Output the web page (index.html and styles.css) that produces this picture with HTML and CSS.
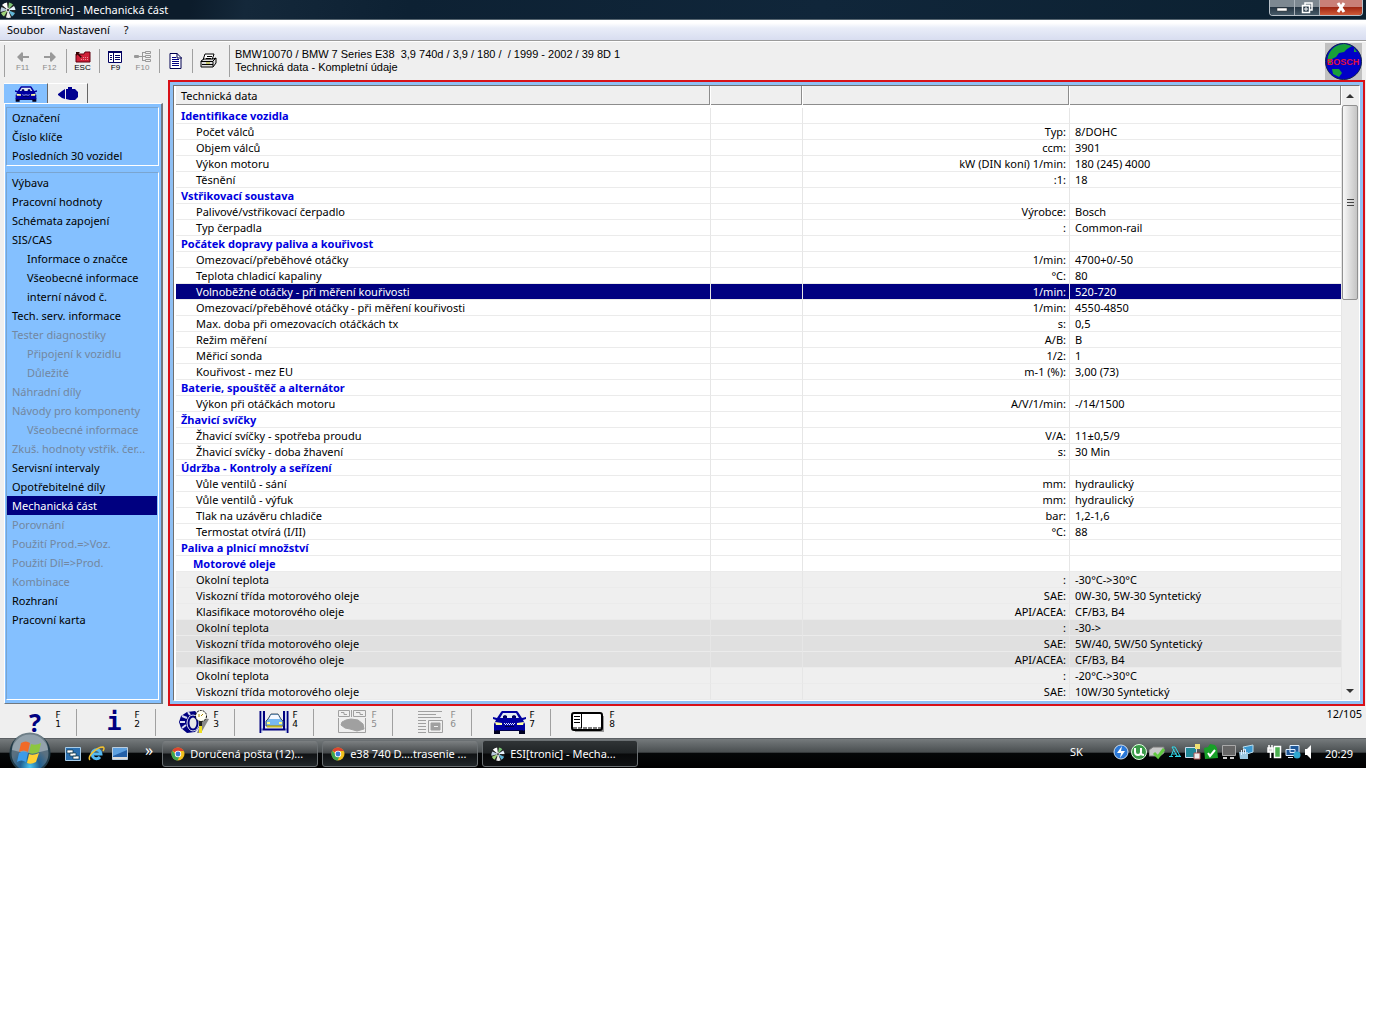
FILE: index.html
```html
<!DOCTYPE html>
<html lang="cs">
<head>
<meta charset="utf-8">
<title>ESI[tronic] - Mechanická část</title>
<link rel="stylesheet" href="styles.css">
</head>
<body>
<svg class="defs" aria-hidden="true">
  <symbol id="car" viewBox="0 0 33 23">
    <path d="M1 18h6v5H1zm25 0h6v5h-6z" fill="#000020"/>
    <path d="M9 0h15l1 1 4 6 4-1v2l-3 1 2 4v6l-2 1H3l-2-1v-6l2-4-3-1V6l4 1 4-6z" fill="#0000a0"/>
    <path d="M10 2h13l3 5H7z" fill="#e4ecf4"/>
    <path d="M10 7V5l2-1 2 1v2zM19 7V5l2-1 2 1v2z" fill="#000060"/>
    <path d="M3 19h27v1H3zM12 15h9v1h-9z" fill="#000048"/>
    <path d="M2 11l7 1v2H3zm29 0l-7 1v2h6z" fill="#ffffa0"/>
    <path d="M11 12.500h11" stroke="#e0e8ff" stroke-dasharray="1 1"/><path d="M12 13.500h10" stroke="#e0e8ff" stroke-dasharray="1 1"/>
  </symbol>
  <symbol id="disc" viewBox="0 0 16 16">
    <circle cx="8" cy="8" r="7.500" fill="#222"/>
    <path d="M8 8L2 3a8 8 0 0 1 5-2.500z" fill="#fff"/><path d="M8 8L9 .5a8 8 0 0 1 4 2z" fill="#7cc576"/>
    <path d="M8 8l6-4a8 8 0 0 1 1.500 4z" fill="#e8f4ff"/><path d="M8 8l7 3a8 8 0 0 1-3 3.500z" fill="#62b7d8"/>
    <path d="M8 8l3 7.500a8 8 0 0 1-5 0z" fill="#eee"/><path d="M8 8l-4 6.500a8 8 0 0 1-3-3.500z" fill="#9fd47a"/>
    <path d="M8 8L.5 10a8 8 0 0 1 1-5z" fill="#bcd"/>
    <circle cx="8" cy="8" r="2" fill="#ddd"/><circle cx="8" cy="8" r="1" fill="#111"/>
  </symbol>
  <symbol id="chrome" viewBox="0 0 14 14">
    <circle cx="7" cy="7" r="6.500" fill="#f2c01e"/>
    <path d="M7 7L1.400 3.700A6.500 6.500 0 0 1 12.800 4H7z" fill="#dd4330"/>
    <path d="M1.400 3.700A6.500 6.500 0 0 0 6.500 13.500L9 8.500 5 8z" fill="#3fa650"/>
    <circle cx="7" cy="7" r="3.200" fill="#fff"/><circle cx="7" cy="7" r="2.400" fill="#3c79d8"/>
  </symbol>
</svg>

<div class="desktop">
<header class="titlebar">
  <svg class="i16"><use href="#disc"/></svg>
  <h1>ESI[tronic] - Mechanická část</h1>
  <div class="winbtns">
    <button aria-label="Minimalizovat"><svg width="12" height="12"><path d="M1 6h10v3H1z" fill="#fff" stroke="#333" stroke-width=".5"/></svg></button>
    <button aria-label="Obnovit"><svg width="12" height="12" fill="none" stroke="#fff" stroke-width="1.500"><path d="M4 3V1h7v7H9"/><path d="M1.500 3.500h7v7h-7z"/><path d="M4 6h2v2H4z" stroke-width="1"/></svg></button>
    <button class="close" aria-label="Zavřít"><svg width="12" height="12"><path d="M3 1l6 9M9 1l-6 9" stroke="#fff" stroke-width="3"/></svg></button>
  </div>
</header>

<nav class="menu"><a href="#">Soubor</a><a href="#">Nastavení</a><a href="#">?</a></nav>

<div class="toolbar">
  <button class="tool off"><svg width="14" height="12"><path d="M1 6l5-5 1 1v3h6v2H7v3l-1 1z" fill="#999"/></svg><span>F11</span></button>
  <button class="tool off"><svg width="14" height="12"><path d="M13 6L8 1 7 2v3H1v2h6v3l1 1z" fill="#999"/></svg><span>F12</span></button>
  <i class="sep"></i>
  <button class="tool"><svg width="16" height="12"><path d="M1 3h8l1-2h5v10H1z" fill="#d02038" stroke="#600010"/><path d="M6 6.500h8M6 8.500h8" stroke="#f09098" stroke-dasharray="1 1"/><path d="M1 1h4L3.500 2.500 7 6 6 7 2.500 3.500 1 5z" fill="#300"/></svg><span>ESC</span></button>
  <i class="sep"></i>
  <button class="tool"><svg width="15" height="12"><path d="M.5.5h13v11H.5z" fill="#fff" stroke="#000060"/><path d="M0 1h14" stroke="#000060" stroke-width="2"/><path d="M5.500 1v11M2 4.500h2M2 6.500h2M2 8.500h2M7 4.500h5M7 6.500h5M7 8.500h5" stroke="#000060"/></svg><span>F9</span></button>
  <button class="tool off"><svg width="18" height="12" fill="none" stroke="#999"><path d="M0 5.500h8M8.500 1.500v8M8 1.500h3M8 5.500h3M8 9.500h3M11.500.5h5v2h-5zM11.500 4.500h5v2h-5zM11.500 8.500h5v2h-5zM.5 4.500h4v2h-4z"/></svg><span>F10</span></button>
  <i class="sep"></i>
  <button class="tool" aria-label="Dokument"><svg width="13" height="16"><path d="M1 .5h7l4 4v11H1z" fill="#fff" stroke="#000050"/><path d="M8 0v5h5" fill="none" stroke="#000050"/><path d="M3 4.500h4M3 6.500h7M3 8.500h7M3 10.500h7M3 12.500h7" stroke="#000080"/></svg></button>
  <i class="sep"></i>
  <button class="tool" aria-label="Tisk"><svg width="17" height="16"><path d="M5 1h9l-2 6H3z" fill="#fff" stroke="#000"/><path d="M7 3.500h5M6 5.500h5" stroke="#000"/><path d="M1 8l3-2h9l3-1v5l-3 4H1z" fill="#ddd" stroke="#000"/><path d="M1 8.500h12v5M13 8l3-3M2 11.500h11" fill="none" stroke="#000"/><path d="M6 10h4" stroke="#aa0"/></svg></button>
  <div class="vehicle">
    <p>BMW10070 / BMW 7 Series E38 &nbsp;3,9 740d / 3,9 / 180 / &nbsp;/ 1999 - 2002 / 39 8D 1</p>
    <p>Technická data - Kompletní údaje</p>
  </div>
  <div class="globe"><svg width="37" height="37"><circle cx="18.500" cy="18.500" r="18" fill="#0000c8" stroke="#102050"/><path d="M3 13C6 5 12 1 20 1l7 2-5 3-3 3-5 1-3 4-4 2-1 5-4-2z" fill="#18a038"/><path d="M7 26l7 0 3 4-3 4-6-3z" fill="#18a038"/><path d="M29 5l3 4-3 0z" fill="#18a038"/><text x="18" y="22" text-anchor="middle">BOSCH</text></svg></div>
</div>

<main class="work">
  <aside class="side">
    <div class="tabs">
      <button class="tab on" aria-label="Vozidlo"><svg width="22" height="16"><use href="#car"/></svg></button>
      <button class="tab" aria-label="Komponenty"><svg width="20" height="16" fill="#000090"><path d="M0 8l4-3 3-2v10l-3-1-4-3zM8 3h2V1h4v2h3l3 3v5l-3 3h-5l-4-1z"/></svg></button>
    </div>
    <div class="panel">
      <nav class="group"><a href="#">Označení</a><a href="#">Číslo klíče</a><a href="#">Posledních 30 vozidel</a></nav>
      <nav class="group rest">
        <a href="#">Výbava</a><a href="#">Pracovní hodnoty</a><a href="#">Schémata zapojení</a><a href="#">SIS/CAS</a>
        <a href="#" class="sub">Informace o značce</a><a href="#" class="sub">Všeobecné informace</a><a href="#" class="sub">interní návod č.</a>
        <a href="#">Tech. serv. informace</a><a href="#" class="off">Tester diagnostiky</a>
        <a href="#" class="sub off">Připojení k vozidlu</a><a href="#" class="sub off">Důležité</a>
        <a href="#" class="off">Náhradní díly</a><a href="#" class="off">Návody pro komponenty</a><a href="#" class="sub off">Všeobecné informace</a>
        <a href="#" class="off">Zkuš. hodnoty vstřik. čer...</a><a href="#">Servisní intervaly</a><a href="#">Opotřebitelné díly</a>
        <a href="#" class="sel">Mechanická část</a><a href="#" class="off">Porovnání</a><a href="#" class="off">Použití Prod.=&gt;Voz.</a>
        <a href="#" class="off">Použití Díl=&gt;Prod.</a><a href="#" class="off">Kombinace</a><a href="#">Rozhraní</a><a href="#">Pracovní karta</a>
      </nav>
    </div>
  </aside>

  <section class="frame">
    <div class="list">
      <table>
        <colgroup><col><col class="c2"><col class="c3"><col class="c4"></colgroup>
        <thead><tr><th>Technická data</th><th></th><th></th><th></th></tr></thead>
        <tbody>
          <tr class="head"><td>Identifikace vozidla</td><td></td><td></td><td></td></tr>
          <tr><td>Počet válců</td><td></td><td>Typ:</td><td>8/DOHC</td></tr>
          <tr><td>Objem válců</td><td></td><td>ccm:</td><td>3901</td></tr>
          <tr><td>Výkon motoru</td><td></td><td>kW (DIN koní) 1/min:</td><td>180 (245) 4000</td></tr>
          <tr><td>Těsnění</td><td></td><td>:1:</td><td>18</td></tr>
          <tr class="head"><td>Vstřikovací soustava</td><td></td><td></td><td></td></tr>
          <tr><td>Palivové/vstřikovací čerpadlo</td><td></td><td>Výrobce:</td><td>Bosch</td></tr>
          <tr><td>Typ čerpadla</td><td></td><td>:</td><td>Common-rail</td></tr>
          <tr class="head"><td>Počátek dopravy paliva a kouřivost</td><td></td><td></td><td></td></tr>
          <tr><td>Omezovací/přeběhové otáčky</td><td></td><td>1/min:</td><td>4700+0/-50</td></tr>
          <tr><td>Teplota chladicí kapaliny</td><td></td><td>°C:</td><td>80</td></tr>
          <tr class="sel"><td>Volnoběžné otáčky - při měření kouřivosti</td><td></td><td>1/min:</td><td>520-720</td></tr>
          <tr><td>Omezovací/přeběhové otáčky - při měření kouřivosti</td><td></td><td>1/min:</td><td>4550-4850</td></tr>
          <tr><td>Max. doba při omezovacích otáčkách tx</td><td></td><td>s:</td><td>0,5</td></tr>
          <tr><td>Režim měření</td><td></td><td>A/B:</td><td>B</td></tr>
          <tr><td>Měřicí sonda</td><td></td><td>1/2:</td><td>1</td></tr>
          <tr><td>Kouřivost - mez EU</td><td></td><td>m-1 (%):</td><td>3,00 (73)</td></tr>
          <tr class="head"><td>Baterie, spouštěč a alternátor</td><td></td><td></td><td></td></tr>
          <tr><td>Výkon při otáčkách motoru</td><td></td><td>A/V/1/min:</td><td>-/14/1500</td></tr>
          <tr class="head"><td>Žhavicí svíčky</td><td></td><td></td><td></td></tr>
          <tr><td>Žhavicí svíčky - spotřeba proudu</td><td></td><td>V/A:</td><td>11±0,5/9</td></tr>
          <tr><td>Žhavicí svíčky - doba žhavení</td><td></td><td>s:</td><td>30 Min</td></tr>
          <tr class="head"><td>Údržba - Kontroly a seřízení</td><td></td><td></td><td></td></tr>
          <tr><td>Vůle ventilů - sání</td><td></td><td>mm:</td><td>hydraulický</td></tr>
          <tr><td>Vůle ventilů - výfuk</td><td></td><td>mm:</td><td>hydraulický</td></tr>
          <tr><td>Tlak na uzávěru chladiče</td><td></td><td>bar:</td><td>1,2-1,6</td></tr>
          <tr><td>Termostat otvírá (I/II)</td><td></td><td>°C:</td><td>88</td></tr>
          <tr class="head"><td>Paliva a plnicí množství</td><td></td><td></td><td></td></tr>
          <tr class="head inner"><td>Motorové oleje</td><td></td><td></td><td></td></tr>
          <tr class="light"><td>Okolní teplota</td><td></td><td>:</td><td>-30°C-&gt;30°C</td></tr>
          <tr class="light"><td>Viskozní třída motorového oleje</td><td></td><td>SAE:</td><td>0W-30, 5W-30 Syntetický</td></tr>
          <tr class="light"><td>Klasifikace motorového oleje</td><td></td><td>API/ACEA:</td><td>CF/B3, B4</td></tr>
          <tr class="dark"><td>Okolní teplota</td><td></td><td>:</td><td>-30-&gt;</td></tr>
          <tr class="dark"><td>Viskozní třída motorového oleje</td><td></td><td>SAE:</td><td>5W/40, 5W/50 Syntetický</td></tr>
          <tr class="dark"><td>Klasifikace motorového oleje</td><td></td><td>API/ACEA:</td><td>CF/B3, B4</td></tr>
          <tr class="light"><td>Okolní teplota</td><td></td><td>:</td><td>-20°C-&gt;30°C</td></tr>
          <tr class="light"><td>Viskozní třída motorového oleje</td><td></td><td>SAE:</td><td>10W/30 Syntetický</td></tr>
        </tbody>
      </table>
      <div class="scroll">
        <button aria-label="Nahoru"><svg width="8" height="4"><path d="M0 4l4-4 4 4z" fill="#333"/></svg></button>
        <div class="track"><div class="thumb"><svg width="7" height="8"><path d="M0 .5h7M0 3.500h7M0 6.500h7" stroke="#444"/></svg></div></div>
        <button aria-label="Dolů"><svg width="8" height="4"><path d="M0 0l4 4 4-4z" fill="#333"/></svg></button>
      </div>
    </div>
  </section>
</main>

<footer class="fbar">
  <button class="fn"><span class="sym">?</span><span class="key">F<br>1</span></button>
  <button class="fn"><span class="sym serif">i</span><span class="key">F<br>2</span></button>
  <button class="fn"><svg width="31" height="24"><path d="M24 8l6 1-8 14h-4z" fill="#888"/><path d="M8 2l8-1 5 5v10l-5 6-8 1-6-5-2-6 2-6z" fill="#000080"/><path d="M3 6l5 2M1 12h5M3 18l4-3M9 2l2 3" stroke="#d8dcf0" stroke-width="2"/><ellipse cx="14" cy="13" rx="6" ry="8" fill="#000080" stroke="#d8dcf0"/><ellipse cx="14" cy="13" rx="3.500" ry="5.500" fill="#e8e8e8"/><circle cx="22" cy="6" r="5.500" fill="#fffff4" stroke="#000" stroke-dasharray="2 1"/><path d="M22 6l2-2M20 4v3" stroke="#a80"/><path d="M20 12h3v11h-3z" fill="#f0e020"/><path d="M20 11h3v5h-3z" fill="#222"/></svg><span class="key">F<br>3</span></button>
  <button class="fn"><svg width="30" height="24"><path d="M1.500 1v22M5 1v18M25 1v18M28.500 1v22M2 19.500h26" stroke="#000080" stroke-width="2"/><path d="M3 1v22M27 1v22" stroke="#b8c8f0"/><path d="M7 16v-5l2-2 3-5h7l3 5 2 2v5z" fill="#78b8f0" stroke="#456"/><path d="M10 9l2-4h7l2 4z" fill="#f4f8ff"/><path d="M8 13h3M20 13h3" stroke="#ffff80" stroke-width="2"/><path d="M8 16.500h15" stroke="#c8b820" stroke-width="2"/></svg><span class="key">F<br>4</span></button>
  <button class="fn off"><svg width="31" height="24" fill="none" stroke="#a0a0a0"><path d="M1.500.5h11v6h-11zM16.500.5h12v6h-12zM14.500 0v7M4 2.500h3v2h3M19 2.500h4v2h3M1.500 8v14.500h27V8"/><path d="M5 12l4-2 5-1 7 1 5 4 1 5-7 2-7-2-5-1-4-3z" fill="#a0a0a0"/></svg><span class="key">F<br>5</span></button>
  <button class="fn off"><svg width="29" height="24" fill="none" stroke="#a0a0a0"><path d="M0 1.500h24M0 4.500h18M0 7.500h23M0 10.500h8M0 13.500h8M0 16.500h8M0 19.500h8M0 22.500h8"/><path d="M10.500 10.500h14v12h-14z"/><path d="M13 13h9v7h-9z" fill="#a0a0a0"/><path d="M16 16.500h4" stroke="#efefef"/></svg><span class="key">F<br>6</span></button>
  <button class="fn"><svg width="33" height="23"><use href="#car"/></svg><span class="key">F<br>7</span></button>
  <button class="fn last"><svg width="35" height="21"><path d="M4 4h29v16H4z" fill="#999"/><rect x="1" y="1" width="30" height="17" rx="2" fill="#fff" stroke="#000" stroke-width="2"/><path d="M10.500 1v15" stroke="#000"/><path d="M3 4.500h6M3 7.500h6M3 10.500h6" stroke="#000"/><path d="M2 16h28" stroke="#000" stroke-dasharray="4 1"/></svg><span class="key">F<br>8</span></button>
  <output class="count">12/105</output>
</footer>

<div class="taskbar">
  <button class="orb" aria-label="Start"><svg width="42" height="42"><defs><radialGradient id="o" cy=".85"><stop offset="0" stop-color="#49c5f0"/><stop offset=".5" stop-color="#205f90"/><stop offset="1" stop-color="#5a7080"/></radialGradient></defs><circle cx="21" cy="21" r="19.500" fill="url(#o)" stroke="#223b48" stroke-width="2"/><path d="M3 18a18 18 0 0 1 36 0q-18 6-36 0z" fill="#fff" opacity=".35"/><path d="M12 11q5-3 9 0l-2 9q-4-3-9 0z" fill="#f06a28"/><path d="M22 12q5 2 10-1l-2 9q-6 3-10 1z" fill="#8cc63f"/><path d="M10 21q4-3 9 0l-2 9q-5-3-9 0z" fill="#3c9be8"/><path d="M20 22q4 2 10-1l-3 9q-5 3-9 1z" fill="#ffd034"/></svg></button>
  <div class="quick">
    <button aria-label="Přepnout okna"><svg width="16" height="14"><path d="M.5.5h15v13H.5z" fill="#2a6fb0" stroke="#a8cce8"/><path d="M2 3h6v3H2zM5 6h6v3H5zM8 9h6v3H8z" fill="#fff" stroke="#134" stroke-width=".7"/></svg></button>
    <button aria-label="Internet Explorer"><svg width="17" height="17"><path d="M4 9h9A4.500 4.500 0 1 0 12 12" fill="none" stroke="#55b8f0" stroke-width="3"/><path d="M2 15C-1 12 8 2 15 2q2 1 0 4" fill="none" stroke="#f0c030" stroke-width="1.500"/></svg></button>
    <button aria-label="Plocha"><svg width="16" height="14"><path d="M.5.5h15v12H.5z" fill="#5da0e0" stroke="#bcd"/><path d="M1 9L15 3v7H1z" fill="#2460a8"/><path d="M1 11h14" stroke="#ddd" stroke-width="2"/></svg></button>
  </div>
  <span class="more">»</span>
  <div class="tasks">
    <button><svg width="14" height="14"><use href="#chrome"/></svg>Doručená pošta (12)...</button>
    <button><svg width="14" height="14"><use href="#chrome"/></svg>e38 740 D....trasenie ...</button>
    <button class="on"><svg width="14" height="14"><use href="#disc"/></svg>ESI[tronic] - Mecha...</button>
  </div>
  <span class="lang">SK</span>
  <div class="tray">
    <svg width="16" height="16"><circle cx="8" cy="8" r="7" fill="#2a78d8" stroke="#cde"/><path d="M9 2L4 9h4l-1 5 5-7H8z" fill="#fff"/></svg>
    <svg width="16" height="16"><circle cx="8" cy="8" r="7.500" fill="#3a9a48" stroke="#dfd"/><path d="M4 4v4q0 3 3 3t3-3V4M10 9q0 2 3 2" fill="none" stroke="#fff" stroke-width="2"/></svg>
    <svg width="16" height="16"><path d="M0 6l4-3h11v6l-4 3H0z" fill="#c8c8c8" stroke="#777"/><path d="M5 9l4 4 6-8" fill="none" stroke="#60c840" stroke-width="3"/></svg>
    <svg width="16" height="16"><path d="M5 3h3l5 9h-3zM7 5L4 12M2 12.500h4M8 12.500h6M5 10h5" fill="none" stroke="#30d8e8"/></svg>
    <svg width="16" height="16"><path d="M.5 3.500h11v10H.5z" fill="#208898" stroke="#cde"/><path d="M10 0h5v5h-5z" fill="#f0e070"/><path d="M9 9h6v6H9z" fill="#eee" stroke="#a55"/></svg>
    <svg width="16" height="16"><path d="M1 4l4-1 2-3 5 1 2 3 1 10-13 1z" fill="#18a028"/><path d="M5 9l2 3 5-6" fill="none" stroke="#fff" stroke-width="2"/></svg>
    <svg width="16" height="16"><path d="M1.500 1.500h13v10h-13z" fill="#666" stroke="#aaa"/><path d="M2 14h4M9 14h4" stroke="#ccc" stroke-width="2"/></svg>
    <svg width="16" height="16"><path d="M4 3l10-2v7l-6 2z" fill="#3a98d0" stroke="#bde"/><path d="M0 8h9v7H1z" fill="#9cc8e0"/><path d="M2.500 11V6M4.500 10V5M6.500 10V5" stroke="#def"/></svg>
    <svg class="gap" width="16" height="16"><path d="M7.500 2.500h6v11h-6z" fill="#4caf50" stroke="#fff" stroke-width="1.500"/><path d="M1 4h5v4H1zM2 1v3M5 1v3M3.500 8v6" stroke="#fff" stroke-width="1.500" fill="#ddd"/></svg>
    <svg width="16" height="16"><path d="M5 1.500h9v7H5zM1 5.500h9v6H1z" fill="#205898" stroke="#def"/><circle cx="12" cy="11" r="3.500" fill="#30a8d0"/><path d="M3 13.500h5" stroke="#def"/></svg>
    <svg width="10" height="16"><path d="M2 5h2l4-4v14l-4-4H2z" fill="#fff"/></svg>
  </div>
  <time class="clock">20:29</time>
</div>
</div>
</body>
</html>
```
FILE: styles.css
```css
* { box-sizing: border-box; }
body { margin: 0; background: #fff; color: #000; font: 11px/16px "Noto Sans", sans-serif; }
button { margin: 0; padding: 0; border: 0; background: none; font: inherit; color: inherit; }
a { color: inherit; text-decoration: none; }
h1, p { margin: 0; font-size: inherit; font-weight: normal; }
svg { display: block; flex: none; }
.defs { position: absolute; width: 0; height: 0; }
.desktop { margin-right: 34px; background: #efefef; }

.titlebar { display: flex; align-items: center; height: 20px; background: linear-gradient(100deg, #0c1c2b 0 14%, #14283a 18%, #0d2133 30%, #10263a 60%, #0b2030); color: #fff; border-bottom: 1px solid #55646f; }
.titlebar h1 { flex: 1; margin-left: 5px; }
.i16 { width: 16px; height: 16px; }
.winbtns { display: flex; align-self: flex-start; margin-right: 3px; height: 16px; border: 1px solid #b8c0c8; border-top: 0; border-radius: 0 0 4px 4px; overflow: hidden; }
.winbtns button { display: flex; align-items: center; justify-content: center; width: 25px; background: linear-gradient(#7d8891 45%, #263644 50%, #475a68); border-right: 1px solid #a8b0b8; }
.winbtns .close { width: 42px; border: 0; background: linear-gradient(#c98078 45%, #a02814 50%, #d05a38); }

.menu { display: flex; align-items: center; gap: 14px; height: 21px; padding-left: 7px; background: linear-gradient(#fff 15%, #e9edf8 40%, #d8ddf0); border-bottom: 1px solid #9b9b9b; }

.toolbar { display: flex; align-items: center; height: 39px; padding-left: 4px; border-top: 1px solid #fff; }
.toolbar::before { content: ""; width: 1px; height: 32px; margin-right: 4px; background: #a0a0a0; }
.tool { display: flex; flex-direction: column; align-items: center; width: 27px; font: 8px/8px "Liberation Sans", sans-serif; }
.tool svg { margin-bottom: 1px; }
.off { color: #8c8c8c; }
.sep { width: 1px; height: 24px; margin: 0 2px 0 3px; background: #a0a0a0; }
.vehicle { flex: 1; margin-left: 7px; padding: 3px 0 3px 5px; border-left: 1px solid #a0a0a0; font: 11px/13px "Liberation Sans", sans-serif; }
.globe { background: #c0c0c0; margin-right: 4px; }
.globe text { font: bold 9px "Liberation Sans", sans-serif; fill: #e01040; }

.work { display: flex; gap: 5px; padding-right: 1px; }
.side { display: flex; flex-direction: column; width: 163px; padding: 3px 0 2px 4px; }
.tabs { display: flex; height: 20px; }
.tab { display: flex; align-items: center; justify-content: center; width: 40px; border-right: 1px solid #666; border-top: 1px solid #fff; }
.tab.on { width: 44px; background: #84c0ff; }
.panel { flex: 1; display: flex; flex-direction: column; gap: 6px; padding: 3px 2px 3px 1px; background: #84c0ff; border: 1px solid #fff; border-right: 2px solid #707880; border-bottom: 1px solid #707880; }
.group { border: 1px solid #7aa5d0; border-right-color: #fff; border-bottom-color: #fff; }
.group a { display: block; height: 19px; margin-right: 1px; padding-left: 5px; line-height: 19px; white-space: nowrap; }
.group .sub { padding-left: 20px; }
.group .off { color: #7387a0; }
.group .sel { background: #000080; color: #fff; }
.rest { flex: 1; }

.frame { flex: 1; min-width: 0; padding: 3px; border: 2px solid #d81018; background: #8fc0f4; }
.list { display: flex; border: 1px solid #707070; border-right-color: #fff; border-bottom-color: #fff; background: #fff; }
table { flex: 1; width: 100%; table-layout: fixed; border-collapse: separate; border-spacing: 0; margin-left: 2px; }
.c2 { width: 92px; } .c3 { width: 267px; } .c4 { width: 272px; }
th { height: 22px; padding: 0 5px; text-align: left; font-weight: normal; line-height: 19px; background: #efefef; background-clip: padding-box; border-right: 1px solid #fff; border-bottom: 3px solid #fff; box-shadow: inset -1px -1px #8c8c8c; }
td { height: 16px; padding: 0 5px; line-height: 15px; white-space: nowrap; border-right: 1px solid #e6e6e6; border-bottom: 1px solid #ebebeb; }
td:first-child { padding-left: 20px; }
td:nth-child(3) { text-align: right; padding-right: 3px; }
.head td { font-weight: bold; color: #0000e0; }
.head td:first-child { padding-left: 5px; }
.inner td:first-child { padding-left: 17px; }
.sel td { background: #000080; color: #fff; }
.light td { background: #efefef; }
.dark td { background: #e0e0e0; }

.scroll { display: flex; flex-direction: column; width: 17px; padding-right: 1px; background: #eee; }
.scroll button { display: flex; align-items: center; justify-content: center; height: 19px; }
.track { flex: 1; }
.thumb { display: flex; align-items: center; justify-content: center; height: 195px; border: 1px solid #909090; border-radius: 2px; background: linear-gradient(90deg, #f8f8f8, #ddd 50%, #c4c4c4); }

.fbar { display: flex; align-items: center; height: 32px; padding-right: 4px; }
.fn { display: flex; align-items: center; justify-content: flex-end; gap: 2px; width: 79px; height: 27px; padding-right: 14px; border-right: 1px solid #a0a0a0; }
.fn:first-child { width: 77px; }
.fn.last { border: 0; }
.sym { width: 30px; margin-right: 2px; font: bold 25px/24px "Noto Sans", sans-serif; color: #000080; text-align: center; }
.serif { font-family: "DejaVu Sans Mono", monospace; }
.key { width: 8px; padding-bottom: 4px; font: 9px/9px "DejaVu Sans", sans-serif; text-align: center; }
.count { margin-left: auto; align-self: flex-start; }

.taskbar { display: flex; align-items: center; height: 30px; padding: 0 13px 0 9px; background: linear-gradient(#757a7c, #4a4f51 45%, #050708 50%, #000); border-top: 1px solid #5c6064; color: #fff; }
.orb { height: 29px; overflow: visible; }
.orb svg { margin-top: -7px; clip-path: inset(0 0 6px 0); }
.quick { display: flex; align-items: center; gap: 7px; margin-left: 14px; }
.more { margin: 0 9px 8px 17px; font-size: 16px; }
.tasks { display: flex; gap: 4px; }
.tasks button { display: flex; align-items: center; gap: 5px; width: 156px; height: 27px; padding-left: 8px; border: 1px solid #6b7073; border-radius: 3px; background: linear-gradient(#7c8082, #45494b 48%, #101214 52%, #22272a); white-space: nowrap; }
.tasks .on { background: linear-gradient(#303436, #202426 48%, #08090a 52%, #101214); }
.lang { margin-left: auto; margin-bottom: 4px; }
.tray { display: flex; gap: 2px; margin: 0 12px 4px 30px; }
.tray .gap { margin-left: 10px; }
```
